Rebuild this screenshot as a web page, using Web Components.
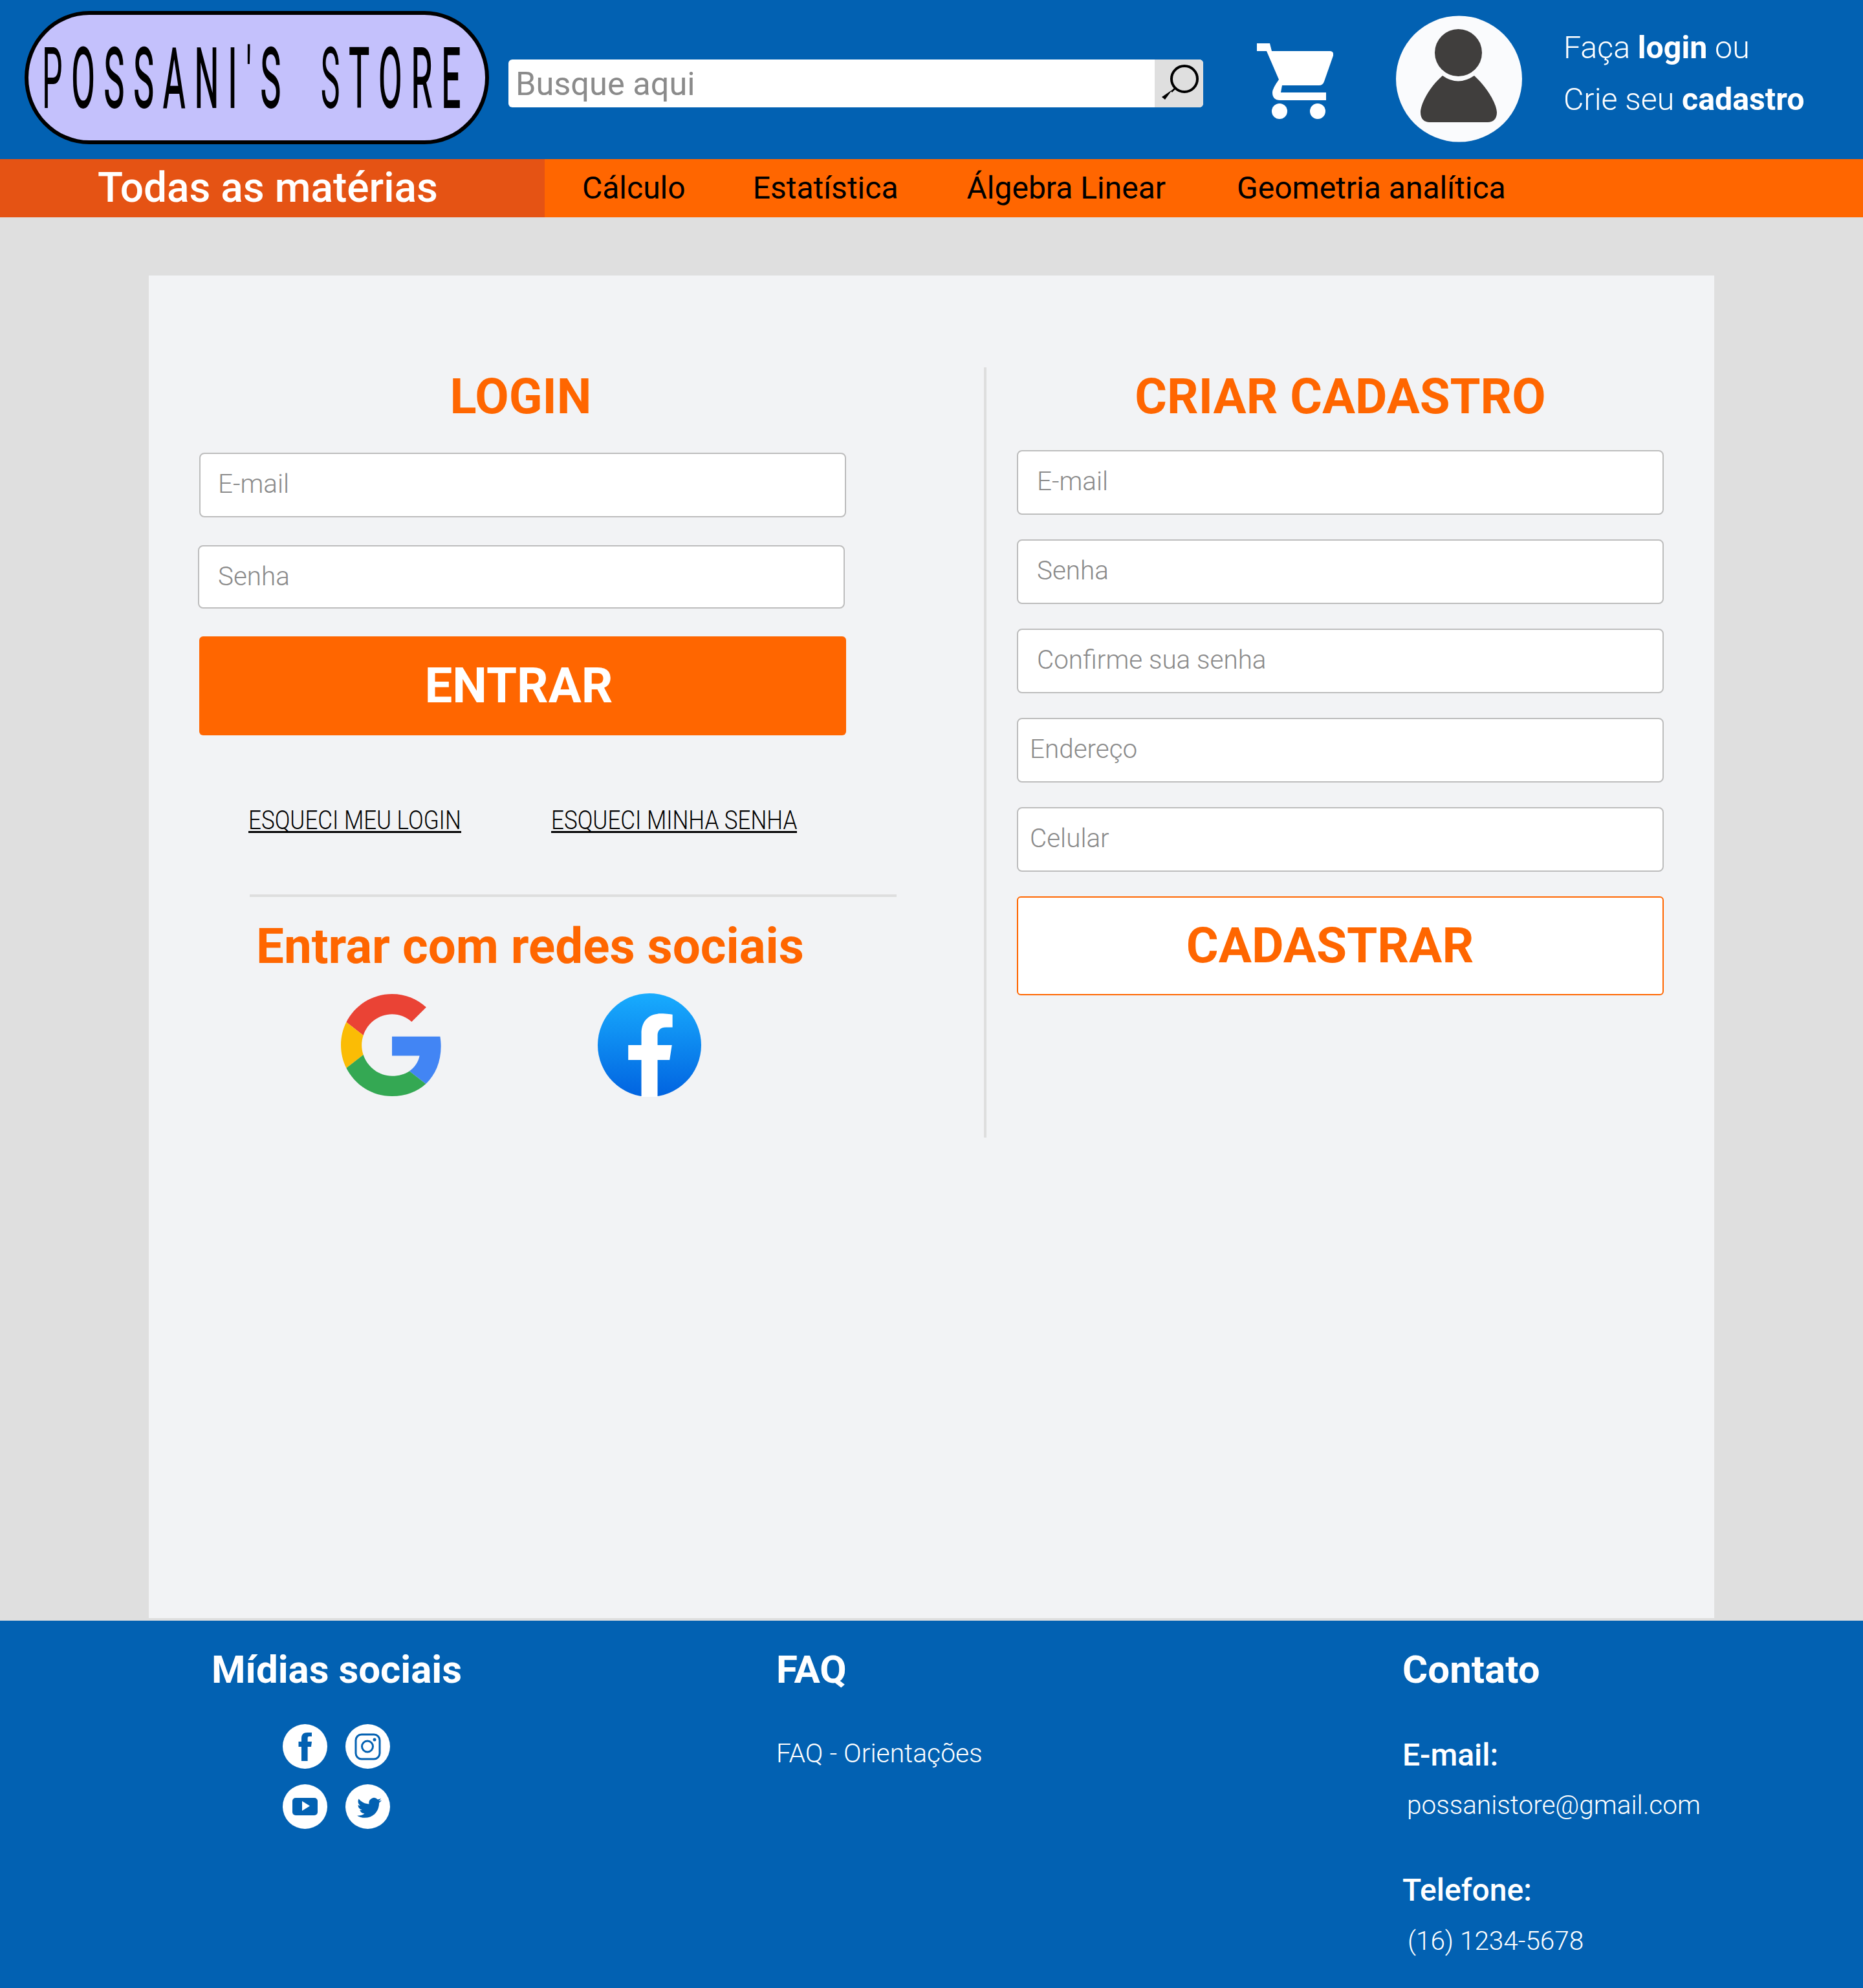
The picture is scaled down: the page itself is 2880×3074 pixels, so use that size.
<!DOCTYPE html>
<html lang="pt-BR">
<head>
<meta charset="utf-8">
<title>Possani's Store</title>
<style>
  html, body { margin: 0; padding: 0; }
  body { width: 2880px; height: 3074px; background: #dfdfdf; font-family: Roboto, sans-serif; overflow: hidden; }
</style>
</head>
<body>
<site-header></site-header>
<site-nav></site-nav>
<auth-page></auth-page>
<site-footer></site-footer>

<script>
// small helper, every element is the same few lines otherwise
function define(name, html) {
  customElements.define(name, class extends HTMLElement {
    constructor() {
      super();
      this.attachShadow({mode: 'open'}).innerHTML = html;
    }
  });
}

define('site-logo', `
<style>
  :host { display: block; box-sizing: border-box; width: 718px; height: 206px; margin-top: 17px; background: #c4c1fc; border: 6px solid #000; border-radius: 100px / 103px; color: #000; }
  div { width: fit-content; margin: 23px 0 0 21px; font: 400 165px/130px Roboto, sans-serif; font-variant: small-caps; white-space: nowrap; letter-spacing: 35px; word-spacing: 50px; transform: scaleX(.38); transform-origin: 0 0; }
  b { font-weight: 400; font-size: 132px; }
</style>
<div><b>P</b>ossani<b>'</b>s <b>S</b>tore</div>`);

define('search-box', `
<style>
  :host { display: flex; width: 1074px; height: 74px; margin: 92px 0 0 30px; background: #fff; border-radius: 6px; overflow: hidden; }
  span { flex: 1; padding-left: 11px; font: 400 50.5px/76px Roboto, sans-serif; color: #8b8b8b; }
  button { width: 75px; height: 74px; padding: 0; border: 0; background: #dfdfdf; }
  svg { display: block; }
</style>
<span>Busque aqui</span>
<button aria-label="Buscar"><svg width="75" height="74" viewBox="0 0 75 74">
  <circle cx="46" cy="30" r="20" fill="none" stroke="#000" stroke-width="4"/>
  <path d="M32 44 26 50" stroke="#000" stroke-width="2.5"/>
  <path d="M27 47 16 62 11 58Z" fill="#000"/>
</svg></button>`);

define('cart-icon', `
<style>:host { display: block; width: 118px; height: 117px; margin: 67px 0 0 83px; } svg { display: block; }</style>
<svg width="118" height="117" viewBox="0 0 118 117" fill="#fff">
  <path d="M0 0H20L23 12H113Q119 12 118 19L104 59Q102 65 96 65H39L37 76H107V88H36Q24 88 24 76Q24 70 34 56L15 12H0Z"/>
  <circle cx="35" cy="105" r="12"/>
  <circle cx="94" cy="105" r="12"/>
</svg>`);

define('user-icon', `
<style>:host { display: block; width: 195px; height: 196px; margin: 24px 0 0 97px; } svg { display: block; }</style>
<svg width="195" height="196" viewBox="0 0 195 196">
  <circle cx="97.5" cy="98" r="97.5" fill="#fafbfd"/>
  <circle cx="96.5" cy="57.5" r="36.5" fill="#403e3d"/>
  <path d="M72 93Q96 110 121 93C142 112 156 138 156 150C156 160 150 165 142 165H52C44 165 38 160 38 150C38 138 50 112 72 93Z" fill="#403e3d"/>
</svg>`);

define('account-links', `
<style>
  :host { display: block; margin: 34px 0 0 64px; color: #fff; font: 300 48.3px/80px Roboto, sans-serif; white-space: nowrap; }
  b { font-weight: 700; }
</style>
<div>Faça <b>login</b> ou</div>
<div>Crie seu <b>cadastro</b></div>`);

define('site-header', `
<style>
  :host { display: flex; align-items: flex-start; box-sizing: border-box; height: 246px; padding-left: 38px; background: #0261b2; }
</style>
<site-logo></site-logo>
<search-box></search-box>
<cart-icon></cart-icon>
<user-icon></user-icon>
<account-links></account-links>`);

define('site-nav', `
<style>
  :host { display: flex; height: 90px; background: #ff6600; color: #000; font: 400 48px/90px Roboto, sans-serif; white-space: nowrap; }
  .all { box-sizing: border-box; width: 842px; padding-left: 151px; background: #e55314; color: #fff; font-weight: 500; font-size: 64px; }
  a { color: inherit; text-decoration: none; }
  .a { margin-left: 58px; } .b { margin-left: 104px; } .c { margin-left: 106px; } .d { margin-left: 110px; }
</style>
<div class="all">Todas as matérias</div>
<a class="a">Cálculo</a>
<a class="b">Estatística</a>
<a class="c">Álgebra Linear</a>
<a class="d">Geometria analítica</a>`);

define('text-field', `
<style>
  :host { display: block; box-sizing: border-box; width: 1000px; height: 100px; padding: 0 29px; background: #fff; border: 2px solid #bdbdbd; border-radius: 8px; color: #8a8a8a; font: 300 40.4px/94px Roboto, sans-serif; }
</style>
<slot></slot>`);

define('login-panel', `
<style>
  :host { display: block; box-sizing: border-box; width: 1291px; padding: 3px 0 0 78px; }
  h2 { width: 994px; margin: 0 0 45px; text-align: center; color: #ff6600; font: 700 76px/84px Roboto, sans-serif; }
  .em { padding: 0 27px; }
  .pw { height: 98px; margin: 43px 0 43px -2px; }
  button { display: block; box-sizing: border-box; width: 1000px; height: 153px; padding: 0 12px 0 0; border: 0; border-radius: 6px; background: #ff6600; color: #fff; font: 700 76px/153px Roboto, sans-serif; }
  .links { display: flex; gap: 139px; margin: 108px 0 0 76px; font: 300 40px/47px Roboto, sans-serif; white-space: nowrap; color: #000; }
  .links a { display: block; width: 329px; height: 40px; border-bottom: 3px solid #000; }
  .links a + a { width: 380px; }
  .links span { display: inline-block; transform: scaleX(.875); transform-origin: 0 0; }
  hr { width: 1000px; height: 4px; margin: 95px 0 0 78px; border: 0; background: #dedede; }
  h3 { margin: 34px 0 0 88px; color: #ff6600; font: 700 76.3px/84px Roboto, sans-serif; white-space: nowrap; }
  .social { display: flex; align-items: flex-start; margin: 32px 0 0 219px; }
  .social svg { display: block; }
  .fb { margin-left: 239px; margin-top: -1px; }
</style>
<h2>LOGIN</h2>
<text-field class="em">E-mail</text-field>
<text-field class="pw">Senha</text-field>
<button>ENTRAR</button>
<div class="links"><a><span>ESQUECI MEU LOGIN</span></a><a><span>ESQUECI MINHA SENHA</span></a></div>
<hr>
<h3>Entrar com redes sociais</h3>
<div class="social">
  <svg width="158" height="158" viewBox="0 0 48 48">
    <path fill="#EA4335" d="M24 9.5c3.54 0 6.71 1.22 9.21 3.6l6.85-6.85C35.9 2.38 30.47 0 24 0 14.62 0 6.51 5.38 2.56 13.22l7.98 6.19C12.43 13.72 17.74 9.5 24 9.5z"/>
    <path fill="#4285F4" d="M46.98 24.55c0-1.57-.15-3.09-.38-4.55H24v9.02h12.94c-.58 2.96-2.26 5.48-4.78 7.18l7.73 6c4.51-4.18 7.09-10.36 7.09-17.65z"/>
    <path fill="#FBBC05" d="M10.53 28.59c-.48-1.45-.76-2.99-.76-4.59s.27-3.14.76-4.59l-7.98-6.19C.92 16.46 0 20.12 0 24c0 3.88.92 7.54 2.56 10.78l7.97-6.19z"/>
    <path fill="#34A853" d="M24 48c6.48 0 11.93-2.13 15.89-5.81l-7.73-6c-2.15 1.45-4.92 2.3-8.16 2.3-6.26 0-11.57-4.22-13.47-9.91l-7.98 6.19C6.51 42.62 14.62 48 24 48z"/>
  </svg>
  <svg class="fb" width="160" height="160" viewBox="0 0 40 40">
    <defs><linearGradient id="fbg" x1="0" y1="0" x2="0" y2="1"><stop offset="0" stop-color="#18acfe"/><stop offset="1" stop-color="#0163e0"/></linearGradient></defs>
    <circle cx="20" cy="20" r="20" fill="url(#fbg)"/>
    <path fill="#fff" d="M16.88 40V25.78h-5.08V20h5.08v-4.4c0-5.01 2.99-7.78 7.55-7.78 2.19 0 4.48.39 4.48.39v4.92h-2.52c-2.49 0-3.26 1.54-3.26 3.13V20h5.55l-.89 5.78h-4.66V40z"/>
  </svg>
</div>`);

define('signup-panel', `
<style>
  :host { display: block; box-sizing: border-box; width: 1129px; height: 1191px; padding: 3px 0 0 47px; border-left: 4px solid #dedede; }
  h2 { width: 1000px; margin: 0 0 41px; text-align: center; color: #ff6600; font: 700 76px/84px Roboto, sans-serif; white-space: nowrap; }
  text-field { margin-bottom: 38px; }
  .tight { padding: 0 18px; }
  button { display: block; box-sizing: border-box; width: 1000px; height: 153px; padding: 0 32px 0 0; border: 2px solid #ff6600; border-radius: 6px; background: #fff; color: #ff6600; font: 700 76.3px/149px Roboto, sans-serif; }
</style>
<h2>CRIAR CADASTRO</h2>
<text-field>E-mail</text-field>
<text-field>Senha</text-field>
<text-field>Confirme sua senha</text-field>
<text-field class="tight">Endereço</text-field>
<text-field class="tight">Celular</text-field>
<button>CADASTRAR</button>`);

define('auth-page', `
<style>
  :host { display: block; box-sizing: border-box; height: 2170px; padding: 90px 230px 4px 230px; }
  .card { display: flex; align-items: flex-start; box-sizing: border-box; height: 2076px; padding-top: 142px; background: #f2f3f5; }
</style>
<div class="card">
  <login-panel></login-panel>
  <signup-panel></signup-panel>
</div>`);

define('social-grid', `
<style>
  :host { display: grid; grid-template-columns: 69px 69px; gap: 24px 28px; margin: 49px 0 0 110px; }
  svg { display: block; }
</style>
<svg width="69" height="69" viewBox="0 0 69 69">
  <circle cx="34.5" cy="34.5" r="34.5" fill="#fff"/>
  <path fill="#0261b2" d="M29 57V35H24.500V27H29V22C29 16 32 13 38 13H45V19H41C39 19 38.600 20 38.600 22V27H45L44 35H38.600V57Z"/>
</svg>
<svg width="69" height="69" viewBox="0 0 69 69">
  <circle cx="34.500" cy="34.500" r="34.500" fill="#fff"/>
  <rect x="16" y="16" width="37" height="38" rx="9" fill="none" stroke="#0261b2" stroke-width="3"/>
  <circle cx="34" cy="34.500" r="8.500" fill="none" stroke="#0261b2" stroke-width="3"/>
  <circle cx="45" cy="24" r="2.500" fill="#0261b2"/>
</svg>
<svg width="69" height="69" viewBox="0 0 69 69">
  <circle cx="34.500" cy="34.500" r="34.500" fill="#fff"/>
  <rect x="15" y="21" width="39" height="27" rx="5" fill="#0261b2"/>
  <path d="M30 26 42 33.500 30 41Z" fill="#fff"/>
</svg>
<svg width="69" height="69" viewBox="0 0 69 69">
  <circle cx="34.500" cy="34.500" r="34.500" fill="#fff"/>
  <path fill="#0261b2" transform="translate(18 17.500) scale(1.58)" d="M23.953 4.570a10 10 0 01-2.825.775 4.958 4.958 0 002.163-2.723c-.951.555-2.005.959-3.127 1.184a4.920 4.920 0 00-8.384 4.482C7.690 8.095 4.067 6.130 1.640 3.162a4.822 4.822 0 00-.666 2.475c0 1.710.870 3.213 2.188 4.096a4.904 4.904 0 01-2.228-.616v.060a4.923 4.923 0 003.946 4.827 4.996 4.996 0 01-2.212.085 4.936 4.936 0 004.604 3.417 9.867 9.867 0 01-6.102 2.105c-.390 0-.779-.023-1.170-.067a13.995 13.995 0 007.557 2.209c9.053 0 13.998-7.496 13.998-13.985 0-.210 0-.420-.015-.630A9.935 9.935 0 0024 4.590z"/>
</svg>`);

define('site-footer', `
<style>
  :host { display: flex; box-sizing: border-box; height: 568px; padding-top: 41px; background: #0261b2; color: #fff; font-family: Roboto, sans-serif; white-space: nowrap; }
  h4 { margin: 0; font: 700 60px/70px Roboto, sans-serif; }
  .midias { box-sizing: border-box; width: 1200px; padding-left: 327px; }
  .faq { width: 968px; }
  .faq p { margin: 71px 0 0; font: 300 40.8px/47px Roboto, sans-serif; }
  .contato h5 { margin: 0; font: 500 48px/56px Roboto, sans-serif; }
  .contato p { margin: 0; font: 300 40.5px/50px Roboto, sans-serif; }
  .contato .em { margin-top: 69px; }
  .contato .ev { margin: 24px 0 0 7px; }
  .contato .tl { margin-top: 79px; }
  .contato .tv { margin: 25px 0 0 8px; }
</style>
<div class="midias"><h4>Mídias sociais</h4><social-grid></social-grid></div>
<div class="faq"><h4>FAQ</h4><p>FAQ - Orientações</p></div>
<div class="contato">
  <h4>Contato</h4>
  <h5 class="em">E-mail:</h5>
  <p class="ev">possanistore@gmail.com</p>
  <h5 class="tl">Telefone:</h5>
  <p class="tv">(16) 1234-5678</p>
</div>`);
</script>
</body>
</html>
